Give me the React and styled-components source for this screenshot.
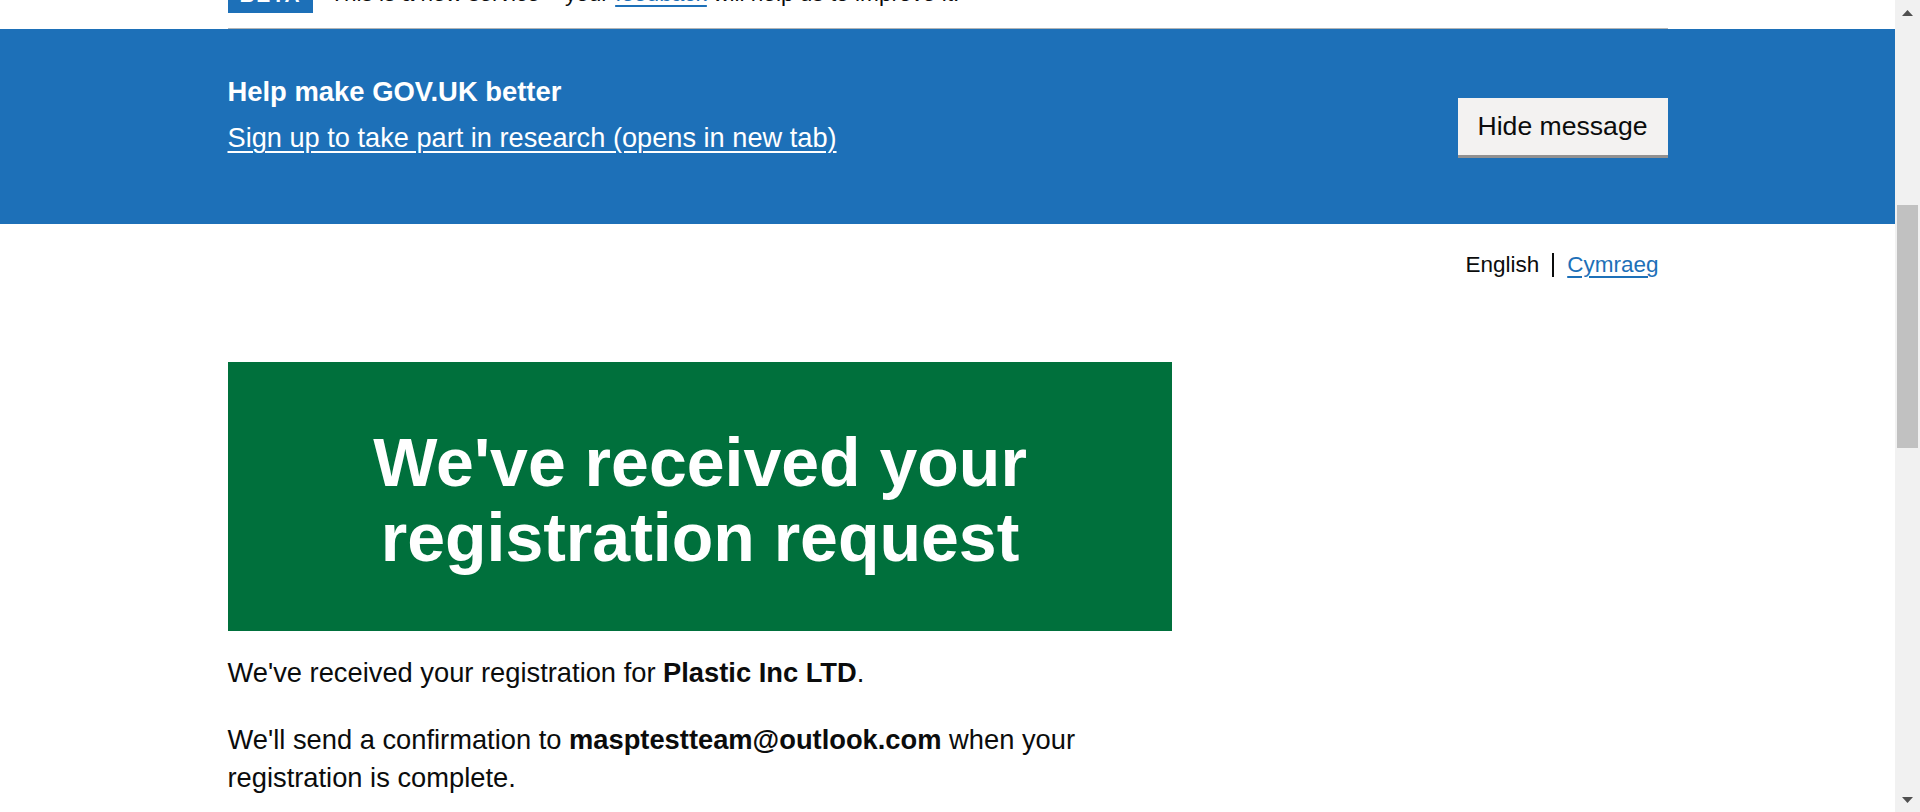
import React from 'react'
import styled, { createGlobalStyle } from 'styled-components'

const GlobalStyle = createGlobalStyle`
  html, body {
    margin: 0;
    padding: 0;
    overflow: hidden;
    background: #ffffff;
  }
  body {
    font-family: "Liberation Sans", Arial, sans-serif;
    color: #0b0c0c;
  }
`

const Screen = styled.div`
  display: flex;
  height: 812px;
  overflow: hidden;
`

const Viewport = styled.div`
  flex: 1;
  min-width: 0;
  overflow: hidden;
`

// the page is scrolled down a little, so the phase banner is cut off
const Page = styled.div`
  margin-top: -40px;
`

const Container = styled.div`
  max-width: 1440px;
  margin: 0 auto;
`

const PhaseBanner = styled.div`
  max-width: 1440px;
  margin: 0 auto;
  padding: 15px 0 15px;
  border-bottom: 1px solid #b1b4b6;
`

const PhaseRow = styled.p`
  display: flex;
  align-items: flex-end;
  margin: 0;
  font-size: 22.6px;
  line-height: 37.5px;
`

const Tag = styled.strong`
  display: inline-block;
  background: #1d70b8;
  color: #ffffff;
  font-size: 21px;
  line-height: 24px;
  letter-spacing: 1.5px;
  text-transform: uppercase;
  padding: 7px 12px 6px;
  margin-right: 17px;
`

const Link = styled.a`
  color: ${p => (p.$light ? '#ffffff' : '#1d70b8')};
  text-decoration: underline;
  text-decoration-thickness: 2px;
  text-underline-offset: 0.16em;
  cursor: pointer;
`

const Recruit = styled.section`
  background: #1d70b8;
  color: #ffffff;
  padding: 44px 0 43.5px;
`

const RecruitInner = styled(Container)`
  display: flex;
  align-items: center;
  justify-content: space-between;
`

const RecruitHeading = styled.h2`
  margin: 0 0 9px;
  font-size: 27.4px;
  line-height: 37.5px;
  font-weight: 700;
`

const RecruitText = styled.p`
  margin: 0 0 24px;
  font-size: 27.2px;
  line-height: 37.5px;
`

const HideButton = styled.button`
  font-family: inherit;
  font-size: 26.6px;
  line-height: 33px;
  color: #0b0c0c;
  background: #f3f2f1;
  border: 3px solid transparent;
  border-radius: 0;
  box-shadow: 0 3px 0 #929191;
  padding: 9px 17px 9px;
  cursor: pointer;
`

const LangList = styled.ul`
  display: flex;
  justify-content: flex-end;
  align-items: center;
  list-style: none;
  margin: 26px 9px 0 0;
  padding: 0;
  font-size: 22.5px;
  line-height: 30px;
`

const LangItem = styled.li`
  display: flex;
  align-items: center;
`

const LangDivider = styled.span`
  display: block;
  width: 2px;
  height: 24px;
  background: #0b0c0c;
  margin: 0 13px;
`

const Main = styled.main`
  padding-top: 82px;
`

const Row = styled.div`
  display: flex;
  margin: 0 -22.5px;
`

const TwoThirds = styled.div`
  width: 66.666%;
  padding: 0 22.5px;
  box-sizing: border-box;
`

const Panel = styled.div`
  background: #00703c;
  color: #ffffff;
  border: 7.5px solid transparent;
  padding: 56px 52.5px 49px;
  margin-bottom: 22.5px;
  text-align: center;
`

const PanelTitle = styled.h1`
  margin: 0;
  font-size: 68px;
  line-height: 75px;
  font-weight: 700;
`

const Body = styled.p`
  margin: 0 0 30px;
  font-size: 27.3px;
  line-height: 37.5px;
`

const ScrollTrack = styled.div`
  width: 25px;
  flex-shrink: 0;
  display: flex;
  flex-direction: column;
  background: #f1f1f1;
`

const ScrollArrow = styled.div`
  height: 25px;
  display: flex;
  align-items: center;
  justify-content: center;
  margin-top: ${p => (p.$down ? 'auto' : '0')};
`

const ScrollThumb = styled.div`
  margin: ${p => p.$top}px 2px 0 2px;
  height: ${p => p.$height}px;
  background: #c1c1c1;
`

const Arrow = ({ down }) => (
  <svg width="11" height="6" viewBox="0 0 11 6">
    <polygon
      points={down ? '0,0 11,0 5.5,6' : '0,6 11,6 5.5,0'}
      fill="#505050"
    />
  </svg>
)

const App = () => {
  return (
    <>
      <GlobalStyle />
      <Screen>
        <Viewport>
          <Page>
            <PhaseBanner>
              <PhaseRow>
                <Tag>Beta</Tag>
                <span>
                  This is a new service – your <Link href="#">feedback</Link> will help us to improve it.
                </span>
              </PhaseRow>
            </PhaseBanner>

            <Recruit>
              <RecruitInner>
                <div>
                  <RecruitHeading>Help make GOV.UK better</RecruitHeading>
                  <RecruitText>
                    <Link $light href="#">Sign up to take part in research (opens in new tab)</Link>
                  </RecruitText>
                </div>
                <HideButton>Hide message</HideButton>
              </RecruitInner>
            </Recruit>

            <Container>
              <LangList>
                <LangItem>English</LangItem>
                <LangItem><LangDivider /></LangItem>
                <LangItem><Link href="#">Cymraeg</Link></LangItem>
              </LangList>

              <Main>
                <Row>
                  <TwoThirds>
                    <Panel>
                      <PanelTitle>We've received your registration request</PanelTitle>
                    </Panel>
                    <Body>
                      We've received your registration for <strong>Plastic Inc LTD</strong>.
                    </Body>
                    <Body>
                      We'll send a confirmation to <strong>masptestteam@outlook.com</strong> when your registration is complete.
                    </Body>
                  </TwoThirds>
                </Row>
              </Main>
            </Container>
          </Page>
        </Viewport>
        <ScrollTrack>
          <ScrollArrow><Arrow /></ScrollArrow>
          <ScrollThumb $top={180} $height={243} />
          <ScrollArrow $down><Arrow down /></ScrollArrow>
        </ScrollTrack>
      </Screen>
    </>
  )
}

export default App
